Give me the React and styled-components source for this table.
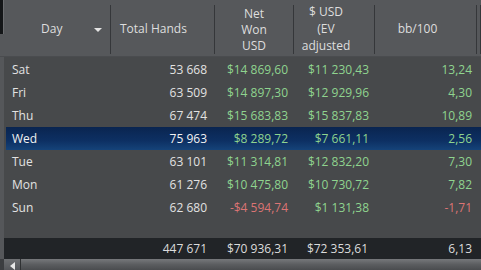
import React from 'react';
import styled, { createGlobalStyle } from 'styled-components';

//? Global reset
const GlobalStyle = createGlobalStyle`
  html, body {
    margin: 0;
    padding: 0;
    background: #47494b;
  }
`;

const COLS = '111px 104px 79px 81px 102px 4px';

//? Styling
const Grid = styled.div`
  width: 481px;
  height: 270px;
  overflow: hidden;
  display: flex;
  flex-direction: column;
  font-family: "Open Sans", "Noto Sans", sans-serif;
  font-size: 12px;
  color: #e2e2e2;
  background: #47494b;
`;

const Header = styled.div`
  height: 57px;
  flex: none;
  display: grid;
  grid-template-columns: ${COLS};
  background: #56585b;
  border-bottom: 1px solid #4a4c4f;
  box-sizing: border-box;
`;

const HeadCell = styled.div`
  display: flex;
  align-items: center;
  justify-content: ${(p) => p.$justify || 'center'};
  padding: ${(p) => p.$pad || '0'};
  margin: 5px 0 2px;
  border-right: 1px solid #35373a;
  text-align: center;
  line-height: ${(p) => p.$lh || 16}px;
  color: #dedede;
  position: relative;
`;

const HeadLines = styled.div`
  margin-top: ${(p) => p.$shift || 0}px;
`;

const Corner = styled.div`
  position: absolute;
  left: 0;
  top: -5px;
  width: 3px;
  height: 34px;
  background: #141618;
  border-right: 1px solid #6b6d70;
`;

const Arrow = styled.span`
  position: absolute;
  right: 8px;
  top: 23px;
  width: 0;
  height: 0;
  border-left: 4px solid transparent;
  border-right: 4px solid transparent;
  border-top: 4px solid #e4e4e4;
`;

const Body = styled.div`
  flex: 1;
  display: flex;
  flex-direction: column;
  padding-top: 1px;
  border-left: 4px solid #55575a;
`;

const Row = styled.div`
  height: 23px;
  display: grid;
  grid-template-columns: 107px 104px 79px 81px 102px 4px;
  align-items: center;
  background: ${(p) =>
    p.$selected ? 'linear-gradient(#0a2550, #0d3063 60%, #154379)' : 'transparent'};
  color: ${(p) => (p.$selected ? '#f2f2f2' : '#e2e2e2')};
  margin-left: ${(p) => (p.$selected ? '2px' : '0')};
  padding-left: ${(p) => (p.$selected ? '0' : '2px')};
`;

const Cell = styled.div`
  text-align: ${(p) => (p.$left ? 'left' : 'right')};
  padding: ${(p) => p.$pad};
  white-space: nowrap;
  color: ${(p) =>
    p.$tone === 'pos' ? '#8fd48f' : p.$tone === 'neg' ? '#dc7474' : 'inherit'};
`;

const Footer = styled.div`
  height: 21px;
  flex: none;
  display: grid;
  grid-template-columns: ${COLS};
  align-items: center;
  background: #212427;
  color: #dcdcdc;
  border-left: 4px solid #55575a;
`;

const ScrollBar = styled.div`
  height: 11px;
  flex: none;
  display: flex;
  background: linear-gradient(#76787b, #5b5d60 50%, #4a4c4f);
  border-left: 4px solid #3c3e41;
`;

const ScrollBtn = styled.div`
  width: 16px;
  display: flex;
  align-items: center;
  justify-content: center;
  border-right: 1px solid #2f3133;
  background: linear-gradient(#6e7073, #54565a);
`;

const LeftTri = styled.span`
  width: 0;
  height: 0;
  border-top: 4px solid transparent;
  border-bottom: 4px solid transparent;
  border-right: 5px solid #e8e8e8;
  margin-top: 2px;
`;

const data = [
  { day: 'Sat', hands: '53 668', won: '$14 869,60', ev: '$11 230,43', bb: '13,24' },
  { day: 'Fri', hands: '63 509', won: '$14 897,30', ev: '$12 929,96', bb: '4,30' },
  { day: 'Thu', hands: '67 474', won: '$15 683,83', ev: '$15 837,83', bb: '10,89' },
  { day: 'Wed', hands: '75 963', won: '$8 289,72', ev: '$7 661,11', bb: '2,56', selected: true },
  { day: 'Tue', hands: '63 101', won: '$11 314,81', ev: '$12 832,20', bb: '7,30' },
  { day: 'Mon', hands: '61 276', won: '$10 475,80', ev: '$10 730,72', bb: '7,82' },
  { day: 'Sun', hands: '62 680', won: '-$4 594,74', ev: '$1 131,38', bb: '-1,71', neg: true },
];

function App() {
  return (
    <>
      <GlobalStyle />
      <Grid>
        <Header>
          <HeadCell $justify="flex-start" $pad="0 0 0 41px">
            <Corner />
            <HeadLines $shift={-2}>Day</HeadLines>
            <Arrow />
          </HeadCell>
          <HeadCell $justify="flex-start" $pad="0 0 0 9px">
            <HeadLines $shift={-2}>Total Hands</HeadLines>
          </HeadCell>
          <HeadCell>
            <HeadLines $shift={0}>Net<br />Won<br />USD</HeadLines>
          </HeadCell>
          <HeadCell $pad="0 16px 0 0" $lh={17}>
            <HeadLines $shift={-2}>$ USD<br />(EV<br />adjusted</HeadLines>
          </HeadCell>
          <HeadCell $pad="0 16px 0 0">
            <HeadLines $shift={-2}>bb/100</HeadLines>
          </HeadCell>
          <HeadCell />
        </Header>
        <Body>
          {data.map((r) => (
            <Row key={r.day} $selected={r.selected}>
              <Cell $left $pad="0 0 0 6px">{r.day}</Cell>
              <Cell $pad="0 10px 0 0">{r.hands}</Cell>
              <Cell $pad="0 8px 0 0" $tone={r.neg ? 'neg' : 'pos'}>{r.won}</Cell>
              <Cell $pad="0 8px 0 0" $tone="pos">{r.ev}</Cell>
              <Cell $pad="0 7px 0 0" $tone={r.neg ? 'neg' : 'pos'}>{r.bb}</Cell>
              <Cell />
            </Row>
          ))}
        </Body>
        <Footer>
          <Cell />
          <Cell $pad="0 12px 0 0">447 671</Cell>
          <Cell $pad="0 10px 0 0">$70 936,31</Cell>
          <Cell $pad="0 11px 0 0">$72 353,61</Cell>
          <Cell $pad="0 9px 0 0">6,13</Cell>
          <Cell />
        </Footer>
        <ScrollBar>
          <ScrollBtn>
            <LeftTri />
          </ScrollBtn>
        </ScrollBar>
      </Grid>
    </>
  );
}

export default App;
